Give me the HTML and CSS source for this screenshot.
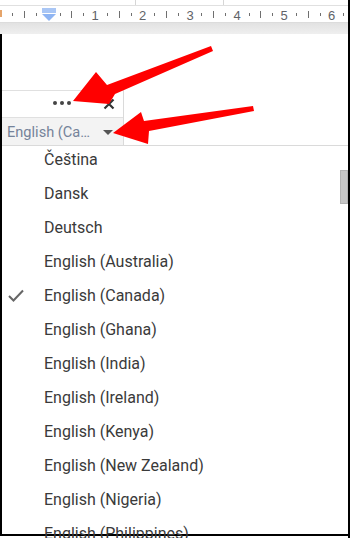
FILE: index.html
```html
<!DOCTYPE html>
<html>
<head>
    <title>Language menu</title>
    <link rel="stylesheet" href="styles.css">
</head>
<body>
    <div class="screen">
        <div class="top-strip"></div>
        <svg class="ruler" width="348" height="16" viewBox="0 0 348 16">
            <rect x="0" y="4" width="2" height="7" fill="#e5a46a"/>
            <g stroke="#6f6f6f" stroke-width="1">
                <line x1="12.5" y1="7" x2="12.5" y2="10"/>
                <line x1="24.5" y1="5" x2="24.5" y2="12"/>
                <line x1="36.5" y1="7" x2="36.5" y2="10"/>
                <line x1="60.5" y1="7" x2="60.5" y2="10"/>
                <line x1="71.5" y1="5" x2="71.5" y2="12"/>
                <line x1="83.5" y1="7" x2="83.5" y2="10"/>
                <line x1="107.5" y1="7" x2="107.5" y2="10"/>
                <line x1="119.5" y1="5" x2="119.5" y2="12"/>
                <line x1="131.5" y1="7" x2="131.5" y2="10"/>
                <line x1="154.5" y1="7" x2="154.5" y2="10"/>
                <line x1="166.5" y1="5" x2="166.5" y2="12"/>
                <line x1="178.5" y1="7" x2="178.5" y2="10"/>
                <line x1="201.5" y1="7" x2="201.5" y2="10"/>
                <line x1="213.5" y1="5" x2="213.5" y2="12"/>
                <line x1="225.5" y1="7" x2="225.5" y2="10"/>
                <line x1="249.5" y1="7" x2="249.5" y2="10"/>
                <line x1="260.5" y1="5" x2="260.5" y2="12"/>
                <line x1="272.5" y1="7" x2="272.5" y2="10"/>
                <line x1="296.5" y1="7" x2="296.5" y2="10"/>
                <line x1="308.5" y1="5" x2="308.5" y2="12"/>
                <line x1="320.5" y1="7" x2="320.5" y2="10"/>
                <line x1="343.5" y1="7" x2="343.5" y2="10"/>
            </g>
            <g class="ruler-num" text-anchor="middle">
                <text x="95" y="13.5">1</text>
                <text x="142.5" y="13.5">2</text>
                <text x="190" y="13.5">3</text>
                <text x="237" y="13.5">4</text>
                <text x="284" y="13.5">5</text>
                <text x="331.5" y="13.5">6</text>
            </g>
            <rect x="42" y="2" width="14" height="5" fill="#a9c6f5"/>
            <polygon points="42,8 56,8 49,15" fill="#8fb5f3"/>
        </svg>
        <div class="shade"></div>

        <div class="doc">
            <div class="popup">
                <div class="popup-bar">
                    <span class="dots"><i></i><i></i><i></i></span>
                    <svg class="close" width="12" height="12" viewBox="0 0 12 12">
                        <path d="M1.5 1.5 L10.5 10.5 M10.5 1.5 L1.5 10.5" stroke="#333" stroke-width="2.2"/>
                    </svg>
                </div>
                <div class="popup-select">
                    <span>English (Ca…</span>
                    <svg width="10" height="5" viewBox="0 0 10 5"><polygon points="0,0 10,0 5,5" fill="#555"/></svg>
                </div>
            </div>

            <ul class="lang-list">
                <li>Čeština</li>
                <li>Dansk</li>
                <li>Deutsch</li>
                <li>English (Australia)</li>
                <li class="checked">
                    <svg class="check" width="16" height="13" viewBox="0 0 16 13">
                        <path d="M1 7 L5.5 11.5 L15 1.5" fill="none" stroke="#666" stroke-width="2"/>
                    </svg>
                    English (Canada)
                </li>
                <li>English (Ghana)</li>
                <li>English (India)</li>
                <li>English (Ireland)</li>
                <li>English (Kenya)</li>
                <li>English (New Zealand)</li>
                <li>English (Nigeria)</li>
                <li>English (Philippines)</li>
            </ul>
            <div class="scroll-thumb"></div>
        </div>

        <!-- callout arrows drawn over the screenshot -->
        <svg class="arrows" width="350" height="538" viewBox="0 0 350 538">
            <g fill="#f00">
                <polygon points="211,46 213,51 115,94 109,104 73,101 96,72 107,85"/>
                <polygon points="253,106 254,111 149,131 148,144 113,133 141,112 144,121"/>
            </g>
        </svg>
    </div>
</body>
</html>
```

FILE: styles.css
```css
body {
    margin: 0;
    background-color: white;
    font-family: Roboto, "Liberation Sans", sans-serif;
}
.screen {
    position: relative;
    width: 348px;
    height: 538px;
    border-right: 2px solid #000;
    overflow: hidden;
}
.top-strip {
    height: 5px;
    border-bottom: 1px solid #e0e0e0;
    background: linear-gradient(to right, white 135px, #d6d6d6 135px, #d6d6d6 136px, white 136px, white 223px, #d6d6d6 223px, #d6d6d6 224px, white 224px);
}
.ruler {
    display: block;
    border-bottom: 1px solid #dcdcdc;
}
.ruler-num {
    font-family: "Liberation Sans", Arial, sans-serif;
    font-size: 13px;
    fill: #5f6368;
}
.shade {
    height: 11px;
    background: linear-gradient(#e2e2e2, #efefef);
}
.doc {
    position: relative;
    height: 502px;
    border-left: 2px solid #000;
    border-bottom: 2px solid #000;
    box-sizing: border-box;
    padding-top: 56px;
}
.popup {
    width: 121px;
    border-top: 1px solid #e0e0e0;
    border-right: 1px solid #dadada;
}
.popup-bar {
    height: 26px;
    border-bottom: 1px solid #e0e0e0;
    display: flex;
    align-items: center;
    justify-content: flex-end;
    gap: 32px;
    padding-right: 8px;
}
.dots {
    display: flex;
    gap: 3px;
    margin-top: -2px;
}
.dots i {
    width: 4px;
    height: 4px;
    border-radius: 50%;
    background-color: #444;
}
.close {
    display: block;
}
.popup-select {
    height: 27px;
    background-color: #f3f3f3;
    display: flex;
    align-items: center;
    justify-content: space-between;
    padding: 0 10px 0 5px;
    font-size: 14.6px;
    color: #75839a;
}
.popup-select svg {
    display: block;
    margin-top: 2px;
}
.lang-list {
    list-style: none;
    margin: 0;
    padding: 0;
    border-top: 1px solid #dadada;
}
.lang-list li {
    position: relative;
    height: 28px;
    line-height: 28px;
    padding: 0 0 6px 42px;
    font-size: 16px;
    color: #3a3a3a;
    white-space: nowrap;
}
.check {
    position: absolute;
    left: 6px;
    top: 7px;
}
.scroll-thumb {
    position: absolute;
    right: 0;
    top: 136px;
    width: 6px;
    height: 32px;
    background-color: #c6c6c6;
    border: 1px solid #b3b3b3;
}
.arrows {
    position: absolute;
    left: 0;
    top: 0;
}
```
